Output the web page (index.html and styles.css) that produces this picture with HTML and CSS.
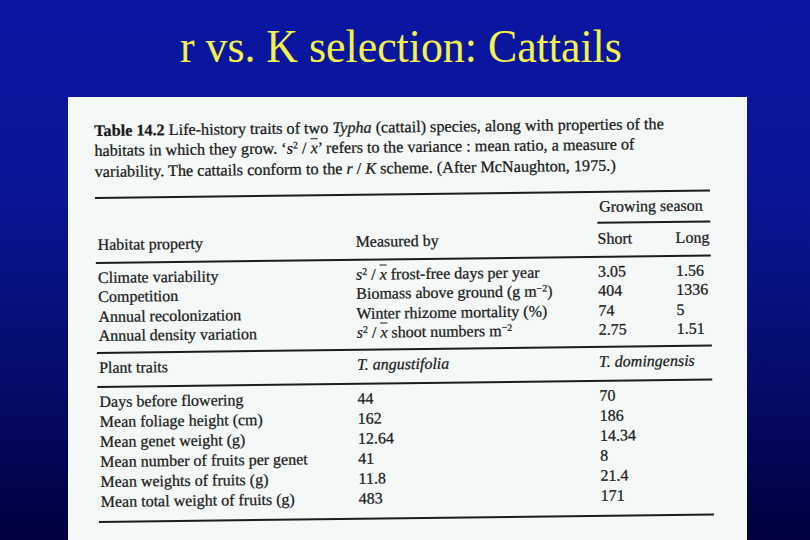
FILE: index.html
```html
<!DOCTYPE html>
<html lang="en">
<head>
<meta charset="utf-8">
<title>r vs. K selection: Cattails</title>
<link rel="stylesheet" href="styles.css">
</head>
<body>
<div class="slide">
  <header class="title-bar">
    <h1 class="title">r vs. K selection: Cattails</h1>
  </header>
  <section class="paper">
    <div class="scan">
      <p class="caption"><b>Table 14.2</b> Life-history traits of two <i>Typha</i> (cattail) species, along with properties of the<br>habitats in which they grow. ‘<i>s</i><sup>2</sup> / <span class="xbar"><i>x</i></span>’ refers to the variance : mean ratio, a measure of<br>variability. The cattails conform to the <i>r</i> / <i>K</i> scheme. (After McNaughton, 1975.)</p>

      <div class="rule rule-top"></div>

      <div class="row row-season">
        <span class="season">Growing season</span>
      </div>

      <div class="row row-head">
        <span>Habitat property</span>
        <span>Measured by</span>
        <span>Short</span>
        <span>Long</span>
      </div>
      <div class="rule rule-head"></div>

      <div class="block">
        <div class="row"><span>Climate variability</span><span><i>s</i><sup>2</sup> / <span class="xbar"><i>x</i></span> frost-free days per year</span><span>3.05</span><span>1.56</span></div>
        <div class="row"><span>Competition</span><span>Biomass above ground (g m<sup>−2</sup>)</span><span>404</span><span>1336</span></div>
        <div class="row"><span>Annual recolonization</span><span>Winter rhizome mortality (%)</span><span>74</span><span>5</span></div>
        <div class="row"><span>Annual density variation</span><span><i>s</i><sup>2</sup> / <span class="xbar"><i>x</i></span> shoot numbers m<sup>−2</sup></span><span>2.75</span><span>1.51</span></div>
      </div>
      <div class="rule rule-mid"></div>

      <div class="row row-plant">
        <span>Plant traits</span>
        <span class="span2"><i>T. angustifolia</i></span>
        <span class="span3"><i>T. domingensis</i></span>
      </div>
      <div class="rule rule-plant"></div>

      <div class="block block-traits">
        <div class="row row-traits"><span>Days before flowering</span><span>44</span><span>70</span></div>
        <div class="row row-traits"><span>Mean foliage height (cm)</span><span>162</span><span>186</span></div>
        <div class="row row-traits"><span>Mean genet weight (g)</span><span>12.64</span><span>14.34</span></div>
        <div class="row row-traits"><span>Mean number of fruits per genet</span><span>41</span><span>8</span></div>
        <div class="row row-traits"><span>Mean weights of fruits (g)</span><span>11.8</span><span>21.4</span></div>
        <div class="row row-traits"><span>Mean total weight of fruits (g)</span><span>483</span><span>171</span></div>
      </div>
      <div class="rule rule-bottom"></div>
    </div>
  </section>
</div>
</body>
</html>
```

FILE: styles.css
```css
* { box-sizing: border-box; }

html, body {
  margin: 0;
  padding: 0;
}

body {
  width: 810px;
  height: 540px;
  overflow: hidden;
  background: linear-gradient(180deg, #0a16a2 0%, #0a1596 35%, #050d70 65%, #00003e 100%);
}

.slide {
  width: 810px;
  height: 540px;
  display: flex;
  flex-direction: column;
}

.title-bar {
  height: 97px;
  padding-top: 24px;
  text-align: center;
  flex: none;
}

.title {
  margin: 0 0 0 -8px;
  display: inline-block;
  font-family: "Liberation Serif", "Times New Roman", serif;
  font-weight: normal;
  font-size: 46px;
  line-height: 46px;
  color: #f2f24a;
  transform: scaleX(0.953);
}

.paper {
  margin-left: 68px;
  width: 679px;
  flex: 1;
  background: #f4f8f6;
  overflow: hidden;
}

.scan {
  width: 615px;
  margin-left: 27px;
  padding-top: 23.5px;
  font-family: "Liberation Serif", "Times New Roman", serif;
  font-size: 16px;
  color: #1a1a1a;
  -webkit-text-stroke: 0.25px #1a1a1a;
  transform: rotate(-0.7deg);
  transform-origin: 0 100px;
}

.caption {
  margin: 0;
  font-size: 16.2px;
  line-height: 20.5px;
  white-space: nowrap;
}

sup {
  font-size: 0.62em;
  line-height: 0;
  vertical-align: 0.5em;
}

.xbar {
  text-decoration: overline;
}

.rule {
  height: 2px;
  background: #1c1c1c;
}

.rule-top { margin-top: 15px; }

.row {
  display: grid;
  grid-template-columns: 260px 242px 78px 35px;
  line-height: 19.5px;
  height: 19.5px;
  white-space: nowrap;
}

.row > span:first-child { padding-left: 2px; }

.row-season {
  margin-top: 4px;
  height: 27px;
}

.season {
  grid-column: 3 / 5;
  padding-bottom: 5.5px;
  border-bottom: 2px solid #1c1c1c;
  height: 27px;
}

.row-head { margin-top: 5px; }
.rule-head { margin-top: 7.5px; }

.block { margin-top: 3.5px; }
.rule-mid { margin-top: 6.5px; }

.row-plant { margin-top: 4px; }
.row-plant .span2 { grid-column: 2; }
.row-plant .span3 { grid-column: 3 / 5; }
.rule-plant { margin-top: 8.5px; }

.row-traits {
  grid-template-columns: 260px 242px 113px;
  height: 20px;
  line-height: 20px;
}

.block-traits { margin-top: 3.5px; }
.rule-bottom { margin-top: 9px; }
```
